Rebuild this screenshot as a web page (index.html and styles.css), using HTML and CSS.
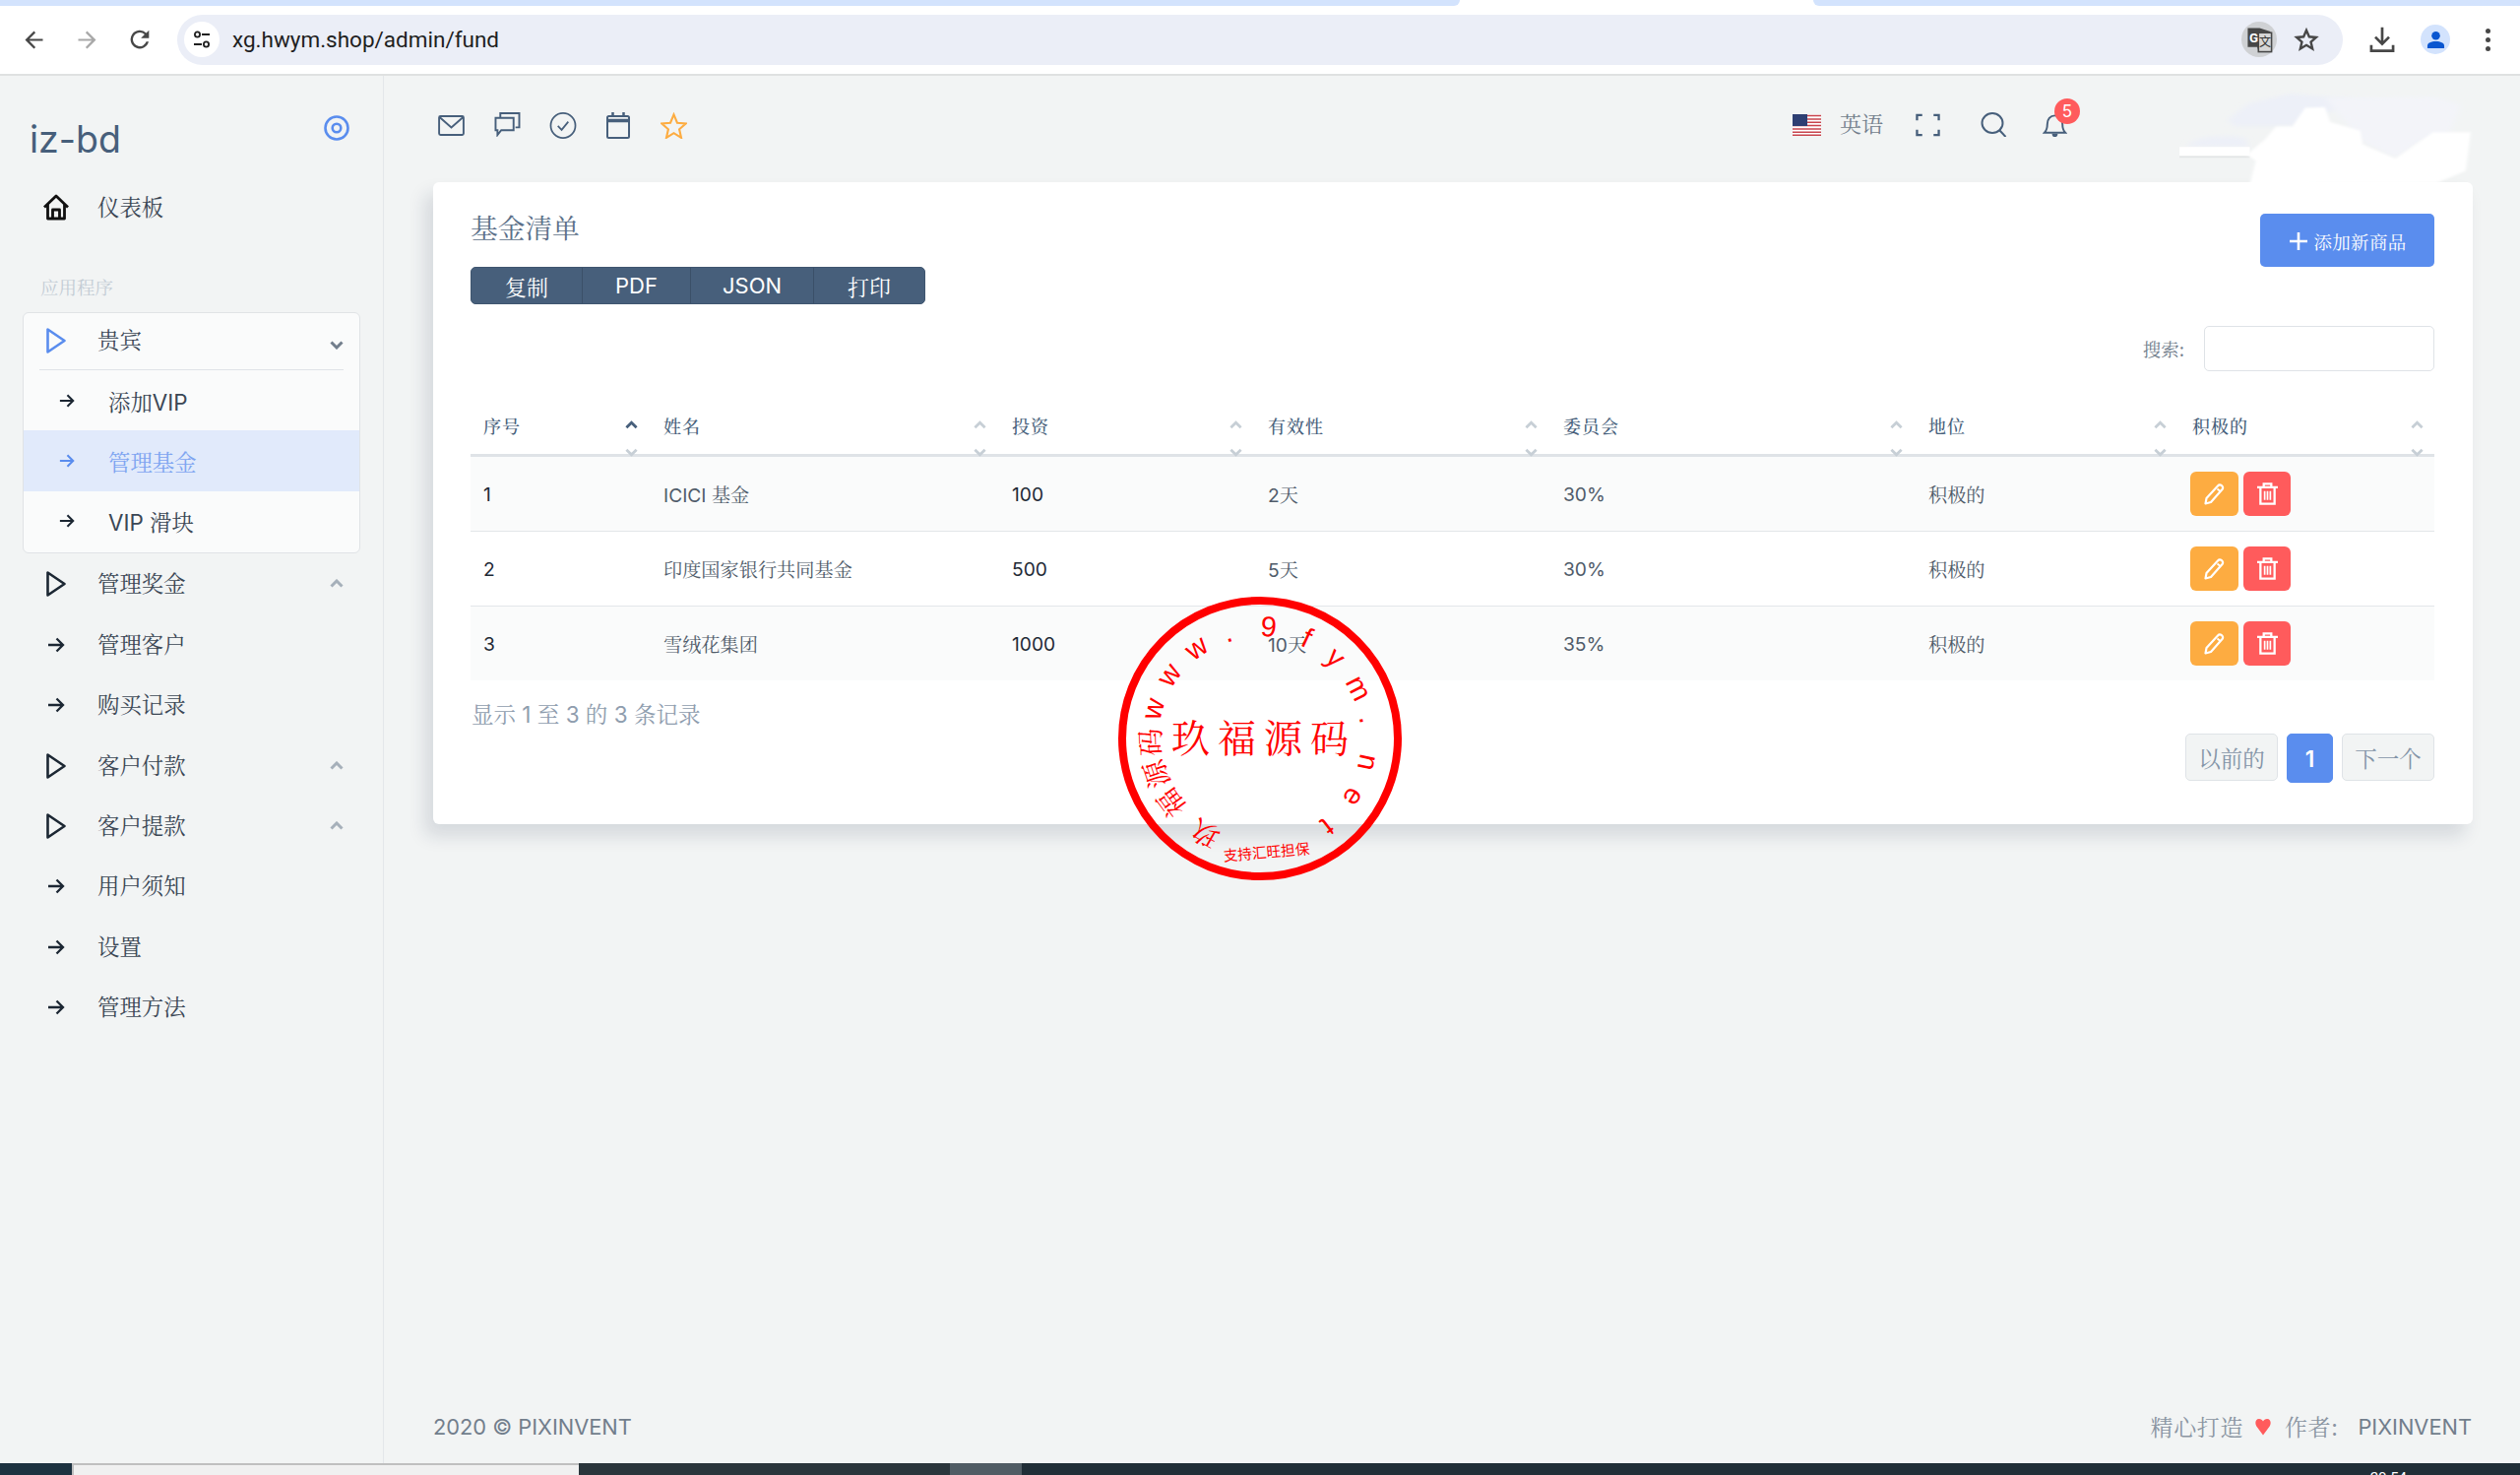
FILE: index.html
```html
<!DOCTYPE html>
<html lang="zh-CN">
<head>
<meta charset="utf-8">
<title>基金清单</title>
<link rel="stylesheet" href="styles.css">
</head>
<body>
<svg class="defs" width="0" height="0" aria-hidden="true">
  <symbol id="i-tri" viewBox="0 0 20 26"><path d="M1.500 1.500v23L18.500 13z" fill="none" stroke="currentColor" stroke-width="2.600" stroke-linejoin="round"/></symbol>
  <symbol id="i-arrow" viewBox="0 0 18 18"><path d="M1 9h15M9.500 2.500 16 9l-6.500 6.500" fill="none" stroke="currentColor" stroke-width="2.300"/></symbol>
  <symbol id="i-up" viewBox="0 0 14 9"><path d="M1.500 7.500 7 2l5.500 5.500" fill="none" stroke="currentColor" stroke-width="3"/></symbol>
  <symbol id="i-down" viewBox="0 0 14 9"><path d="M1.500 1.500 7 7l5.500-5.500" fill="none" stroke="currentColor" stroke-width="3"/></symbol>
  <symbol id="i-pen" viewBox="0 0 22 22"><path d="M1.500 20.500l1-5.500L14 2.500c1.100-1.200 2.600-1.300 3.900-.3s1.600 2.600.6 3.800L7 19z" fill="none" stroke="#fff" stroke-width="2.200" stroke-linejoin="round"/><path d="M13.500 5.500l3 2.500" stroke="#fff" stroke-width="1.800"/></symbol>
  <symbol id="i-trash" viewBox="0 0 22 24"><path d="M0 5h22M7 5V1.500h8V5M3.500 5v17.500h15V5" fill="none" stroke="#fff" stroke-width="2.400"/><path d="M8 9v9.500M11 9v9.500M14 9v9.500" fill="none" stroke="#fff" stroke-width="1.800"/></symbol>
</svg>

<header class="chrome">
  <div class="tabstrip"><span class="strip strip-a"></span><span class="strip-gap"></span><span class="strip strip-b"></span></div>
  <div class="toolbar">
    <svg class="tb-ico tb-back" viewBox="0 0 24 24"><path d="M20 11.100H7.800l5.600-5.600L12 4l-8 8 8 8 1.400-1.400-5.600-5.700H20z" fill="#474747"/></svg>
    <svg class="tb-ico tb-fwd" viewBox="0 0 24 24"><path d="M4 11.100h12.200l-5.600-5.600L12 4l8 8-8 8-1.400-1.400 5.600-5.700H4z" fill="#a8a8a8"/></svg>
    <svg class="tb-ico tb-reload" viewBox="0 0 24 24"><path d="M17.650 6.350A8 8 0 1 0 19.730 14h-2.080A6 6 0 1 1 12 6c1.660 0 3.140.69 4.220 1.780L13 11h7V4z" fill="#474747"/></svg>
    <div class="omnibox">
      <span class="site-btn"><svg class="site-ico" viewBox="0 0 20 20"><circle cx="5.500" cy="5" r="2.600" fill="none" stroke="#1f1f1f" stroke-width="1.800"/><path d="M10 5h8M2 15h8" stroke="#1f1f1f" stroke-width="1.800"/><circle cx="14.500" cy="15" r="2.600" fill="none" stroke="#1f1f1f" stroke-width="1.800"/></svg></span>
      <span class="url">xg.hwym.shop/admin/fund</span>
      <span class="tr-btn"><svg class="tr-ico" viewBox="0 0 24 24"><path d="M2 2h10l9 3v16H11l-1-3H2z" fill="#474747"/><rect x="11" y="6" width="11" height="16" fill="#d6d6d6" stroke="#474747" stroke-width="1.300"/><text x="7" y="14" class="tr-g">G</text><text x="16.500" y="17.500" class="tr-w">文</text></svg></span>
      <svg class="om-star" viewBox="0 0 24 24"><path d="M12 3.500l2.600 6 6.500.6-4.900 4.300 1.500 6.400L12 17.400l-5.700 3.400 1.500-6.400-4.900-4.300 6.500-.6z" fill="none" stroke="#474747" stroke-width="2.200" stroke-linejoin="miter"/></svg>
    </div>
    <svg class="tb-download" viewBox="0 0 24 24"><path d="M12 1.500v14M6 10l6 6 6-6M2.500 17v5h19v-5" fill="none" stroke="#474747" stroke-width="2.300"/></svg>
    <span class="avatar"><svg class="avatar-ico" viewBox="0 0 20 20"><circle cx="10" cy="5.500" r="4.500" fill="#0b57d0"/><path d="M1 19v-2.500C1 13 5 11.500 10 11.500s9 1.500 9 5V19z" fill="#0b57d0"/></svg></span>
    <span class="kebab"><i></i><i></i><i></i></span>
  </div>
</header>

<div class="app">
  <aside class="sidebar">
    <div class="brand">
      <span class="logo">iz-bd</span>
      <svg class="brand-target" viewBox="0 0 26 26"><circle cx="13" cy="13" r="11.500" fill="none" stroke="#5a8dee" stroke-width="2.600"/><circle cx="13" cy="13" r="4.300" fill="none" stroke="#5a8dee" stroke-width="2.600"/></svg>
    </div>
    <a class="nav-item"><svg class="nav-home" viewBox="0 0 28 27"><path d="M2 13.500 14 2l12 11.500M5.500 10.500V25h17V10.500M10.500 25v-9h7v9" fill="none" stroke="#111" stroke-width="2.800" stroke-linejoin="round"/></svg><span class="nav-label">仪表板</span></a>
    <div class="section-label">应用程序</div>
    <div class="group">
      <a class="nav-item group-head"><svg class="nav-tri"><use href="#i-tri"/></svg><span class="nav-label">贵宾</span><svg class="nav-chev"><use href="#i-down"/></svg></a>
      <a class="sub-item"><svg class="sub-arrow"><use href="#i-arrow"/></svg><span>添加VIP</span></a>
      <a class="sub-item is-active"><svg class="sub-arrow"><use href="#i-arrow"/></svg><span>管理基金</span></a>
      <a class="sub-item"><svg class="sub-arrow"><use href="#i-arrow"/></svg><span>VIP 滑块</span></a>
    </div>
    <a class="nav-item"><svg class="nav-tri"><use href="#i-tri"/></svg><span class="nav-label">管理奖金</span><svg class="nav-chev"><use href="#i-up"/></svg></a>
    <a class="nav-item"><svg class="nav-arrow"><use href="#i-arrow"/></svg><span class="nav-label">管理客户</span></a>
    <a class="nav-item"><svg class="nav-arrow"><use href="#i-arrow"/></svg><span class="nav-label">购买记录</span></a>
    <a class="nav-item"><svg class="nav-tri"><use href="#i-tri"/></svg><span class="nav-label">客户付款</span><svg class="nav-chev"><use href="#i-up"/></svg></a>
    <a class="nav-item"><svg class="nav-tri"><use href="#i-tri"/></svg><span class="nav-label">客户提款</span><svg class="nav-chev"><use href="#i-up"/></svg></a>
    <a class="nav-item"><svg class="nav-arrow"><use href="#i-arrow"/></svg><span class="nav-label">用户须知</span></a>
    <a class="nav-item"><svg class="nav-arrow"><use href="#i-arrow"/></svg><span class="nav-label">设置</span></a>
    <a class="nav-item"><svg class="nav-arrow"><use href="#i-arrow"/></svg><span class="nav-label">管理方法</span></a>
  </aside>

  <main class="main">
    <div class="topbar">
      <div class="top-left">
        <svg class="top-ico ico-mail" viewBox="0 0 28 22"><rect x="1" y="1" width="26" height="20" rx="1.500" fill="none" stroke="currentColor" stroke-width="2"/><path d="M1.500 2 14 13 26.500 2" fill="none" stroke="currentColor" stroke-width="2"/></svg>
        <svg class="top-ico ico-chat" viewBox="0 0 28 26"><path d="M7 5V1h20v15h-4M2 6h19v13H8l-4 5v-5H2z" fill="none" stroke="currentColor" stroke-width="2"/></svg>
        <svg class="top-ico ico-check" viewBox="0 0 28 28"><circle cx="14" cy="14" r="13" fill="none" stroke="currentColor" stroke-width="1.800"/><path d="M8.500 14.500l4 4 7-8.500" fill="none" stroke="currentColor" stroke-width="1.800"/></svg>
        <svg class="top-ico ico-cal" viewBox="0 0 24 27"><rect x="1" y="4" width="22" height="22" rx="1.500" fill="none" stroke="currentColor" stroke-width="2"/><path d="M1 8.500h22" stroke="currentColor" stroke-width="3.500"/><path d="M6.500 0v5M17.500 0v5" stroke="currentColor" stroke-width="2.500"/></svg>
        <svg class="top-ico ico-star" viewBox="0 0 28 27"><path d="M14 2l3.600 8.600 9 .8-6.800 6 2 8.900L14 21.500l-7.800 4.800 2-8.900-6.800-6 9-.8z" fill="none" stroke="#fdac41" stroke-width="2.200"/></svg>
      </div>
      <div class="top-right">
        <svg class="flag" viewBox="0 0 29 22">
          <rect width="29" height="22" fill="#fff"/>
          <path d="M0 1.500h29M0 5h29M0 8.300h29M0 11.500h29M0 15h29M0 18.200h29M0 21.300h29" stroke="#c8444d" stroke-width="1.600"/>
          <rect width="15" height="12" fill="#2e3f73"/>
        </svg>
        <span class="lang">英语</span>
        <svg class="top-ico ico-full" viewBox="0 0 26 24"><path d="M7 1.500H1.500V7M19 1.500h5.500V7M7 22.500H1.500V17M19 22.500h5.500V17" fill="none" stroke="currentColor" stroke-width="2.400"/></svg>
        <svg class="top-ico ico-search" viewBox="0 0 27 25"><ellipse cx="12" cy="11" rx="10.500" ry="10" fill="none" stroke="currentColor" stroke-width="2"/><path d="M19 18l6.500 7" stroke="currentColor" stroke-width="2"/></svg>
        <span class="bell-wrap">
          <svg class="top-ico ico-bell" viewBox="0 0 26 25"><path d="M2 20c2-2 3-4 3-9 0-5 3-9 8-9s8 4 8 9c0 5 1 7 3 9z" fill="none" stroke="currentColor" stroke-width="2"/><path d="M10 21a3 3.500 0 0 0 6 0z" fill="currentColor"/></svg>
          <span class="badge">5</span>
        </span>
      </div>
    </div>

    <section class="card">
      <div class="card-head">
        <div>
          <h1 class="card-title">基金清单</h1>
          <div class="btn-group"><button class="btn-g btn-g1">复制</button><button class="btn-g btn-g2">PDF</button><button class="btn-g btn-g3">JSON</button><button class="btn-g btn-g4">打印</button></div>
        </div>
        <button class="btn-add"><svg class="add-plus" viewBox="0 0 18 18"><path d="M9 0v18M0 9h18" stroke="#fff" stroke-width="2.600"/></svg>添加新商品</button>
      </div>
      <div class="search-row"><label class="search-label">搜索:</label><input class="search-input" type="text" aria-label="搜索"></div>
      <table class="table">
        <colgroup><col class="c1"><col class="c2"><col class="c3"><col class="c4"><col class="c5"><col class="c6"><col class="c7"></colgroup>
        <thead>
          <tr>
            <th>序号<svg class="sort-up sort-on"><use href="#i-up"/></svg><svg class="sort-down"><use href="#i-down"/></svg></th>
            <th>姓名<svg class="sort-up"><use href="#i-up"/></svg><svg class="sort-down"><use href="#i-down"/></svg></th>
            <th>投资<svg class="sort-up"><use href="#i-up"/></svg><svg class="sort-down"><use href="#i-down"/></svg></th>
            <th>有效性<svg class="sort-up"><use href="#i-up"/></svg><svg class="sort-down"><use href="#i-down"/></svg></th>
            <th>委员会<svg class="sort-up"><use href="#i-up"/></svg><svg class="sort-down"><use href="#i-down"/></svg></th>
            <th>地位<svg class="sort-up"><use href="#i-up"/></svg><svg class="sort-down"><use href="#i-down"/></svg></th>
            <th>积极的<svg class="sort-up"><use href="#i-up"/></svg><svg class="sort-down"><use href="#i-down"/></svg></th>
          </tr>
        </thead>
        <tbody>
          <tr><td class="num">1</td><td>ICICI 基金</td><td class="num">100</td><td>2天</td><td>30%</td><td>积极的</td><td><div class="actions"><button class="act act-edit"><svg class="act-pen"><use href="#i-pen"/></svg></button><button class="act act-del"><svg class="act-trash"><use href="#i-trash"/></svg></button></div></td></tr>
          <tr><td class="num">2</td><td>印度国家银行共同基金</td><td class="num">500</td><td>5天</td><td>30%</td><td>积极的</td><td><div class="actions"><button class="act act-edit"><svg class="act-pen"><use href="#i-pen"/></svg></button><button class="act act-del"><svg class="act-trash"><use href="#i-trash"/></svg></button></div></td></tr>
          <tr><td class="num">3</td><td>雪绒花集团</td><td class="num">1000</td><td>10天</td><td>35%</td><td>积极的</td><td><div class="actions"><button class="act act-edit"><svg class="act-pen"><use href="#i-pen"/></svg></button><button class="act act-del"><svg class="act-trash"><use href="#i-trash"/></svg></button></div></td></tr>
        </tbody>
      </table>
      <div class="table-foot">
        <div class="info">显示 1 至 3 的 3 条记录</div>
        <div class="pager"><button class="pg pg-prev">以前的</button><button class="pg pg-cur">1</button><button class="pg pg-next">下一个</button></div>
      </div>
    </section>

    <footer class="footer">
      <span>2020 © PIXINVENT</span>
      <span class="foot-right"><span class="foot-cjk">精心打造</span><svg class="heart" viewBox="0 0 16 18"><path d="M8 17.500 1.300 8.500C-.6 5.400.3 1 3.900 1 5.800 1 7.200 2 8 3.500 8.800 2 10.200 1 12.100 1c3.600 0 4.500 4.400 2.600 7.500z" fill="#ff5b5c"/></svg><span class="foot-cjk">作者:</span><span class="foot-name">PIXINVENT</span></span>
    </footer>
  </main>
</div>

<div class="taskbar">
  <span class="task-start"></span>
  <span class="task-window"></span>
  <span class="task-a"></span>
  <span class="task-hi"></span>
  <span class="task-b"><span class="clock">20:54</span></span>
</div>

<svg class="cloud" viewBox="880 270 600 290" preserveAspectRatio="none" aria-hidden="true">
  <defs>
    <filter id="soft" x="-10%" y="-10%" width="120%" height="120%"><feGaussianBlur stdDeviation="6"/></filter>
    <filter id="edge" x="-5%" y="-5%" width="110%" height="110%"><feGaussianBlur stdDeviation="3"/></filter>
  </defs>
  <g filter="url(#soft)">
    <path d="M985 365 1030 315 1110 285 1190 295 1300 300 1180 345 1120 385 1000 385z" fill="#edf0f8"/>
    <path d="M1180 300 1400 295 1450 320 1430 400 1380 425 1320 480 1250 425z" fill="#f3f4f9"/>
    <path d="M905 445C915 420 960 408 1020 418L1030 447z" fill="#edf0f8"/>
  </g>
  <path d="M890 447H1030V474H890z" fill="#fff"/>
  <path d="M890 475H1030V480H890z" fill="#e3e5e6"/>
  <path d="M1030 560 1042 490 1025 470 1060 425 1082 385 1115 385 1140 328 1180 326 1190 372 1250 398 1255 440 1320 482 1395 402 1470 402 1460 520 1402 556z" fill="#fff" filter="url(#edge)"/>
</svg>

<svg class="stamp" viewBox="-144 -144 288 288">
  <circle r="140" fill="none" stroke="#f00" stroke-width="8"/>
  <text class="st-center" x="4" y="14">玖福源码</text>
  <g class="st-cjk">
    <text transform="rotate(210) translate(0 -101)">玖</text>
    <text transform="rotate(234) translate(0 -101)">福</text>
    <text transform="rotate(251) translate(0 -101)">源</text>
    <text transform="rotate(268) translate(0 -101)">码</text>
  </g>
  <g class="st-lat">
    <text transform="rotate(285.500) translate(0 -103)">w</text>
    <text transform="rotate(305) translate(0 -103)">w</text>
    <text transform="rotate(325) translate(0 -103)">w</text>
    <text transform="rotate(343) translate(0 -103)">.</text>
    <text transform="rotate(4.500) translate(0 -104)">9</text>
    <text transform="rotate(25) translate(0 -103)">f</text>
    <text transform="rotate(43) translate(0 -103)">y</text>
    <text transform="rotate(63) translate(0 -103)">m</text>
    <text transform="rotate(80) translate(0 -103)">.</text>
    <text transform="rotate(102.600) translate(0 -103)">n</text>
    <text transform="rotate(122) translate(0 -103)">e</text>
    <text transform="rotate(142.600) translate(0 -103)">t</text>
  </g>
  <text class="st-small" transform="translate(7 121) rotate(-5)" textLength="88" lengthAdjust="spacingAndGlyphs">支持汇旺担保</text>
</svg>
</body>
</html>
```

FILE: styles.css
```css
* { box-sizing: border-box; }
html, body { margin: 0; padding: 0; width: 2560px; height: 1498px; overflow: hidden; }
body {
  position: relative;
  display: flex;
  flex-direction: column;
  background: #f2f4f4;
  color: #304156;
  font-family: Inter, "Noto Serif CJK SC", "Noto Sans CJK SC", sans-serif;
  font-size: 19.2px;
}
button { font: inherit; border: 0; padding: 0; }
svg { display: block; flex: none; }
.defs { position: absolute; }

/* browser chrome */
.chrome { flex: none; background: #d3e3fd; }
.tabstrip { display: flex; height: 6px; background: #fff; }
.strip { display: block; height: 6px; background: #d3e3fd; }
.strip-a { width: 1483px; border-bottom-right-radius: 10px; }
.strip-gap { width: 359px; }
.strip-b { flex: 1; border-bottom-left-radius: 10px; }
.toolbar {
  display: flex; align-items: center;
  height: 71px; padding: 0 0 1px 21px;
  background: #fff;
  border-bottom: 2px solid #dfe1e1;
}
.tb-ico { width: 27px; height: 27px; }
.tb-fwd { margin-left: 27px; }
.tb-reload { margin-left: 26px; width: 28px; height: 28px; }
.omnibox {
  display: flex; align-items: center;
  width: 2200px; height: 51px; margin-left: 24px; padding: 0 24px 0 7px;
  background: #ebeef7; border-radius: 26px;
}
.site-btn { display: flex; align-items: center; justify-content: center; width: 36px; height: 36px; border-radius: 50%; background: #fff; }
.site-ico { width: 20px; height: 20px; }
.url { margin-left: 13px; font-family: Roboto, sans-serif; font-size: 22.500px; color: #1f1f1f; }
.tr-btn { display: flex; align-items: center; justify-content: center; width: 36px; height: 36px; margin-left: auto; border-radius: 50%; background: #cfd1d4; }
.tr-ico { width: 29px; height: 29px; }
.tr-g { font: 700 11px Roboto, sans-serif; fill: #fff; text-anchor: middle; }
.tr-w { font: 10px "Noto Sans CJK SC", sans-serif; fill: #333; text-anchor: middle; }
.om-star { width: 26px; height: 26px; margin-left: 17px; }
.tb-download { width: 28px; height: 28px; margin-left: 26px; }
.avatar { display: flex; align-items: center; justify-content: center; width: 30px; height: 30px; margin-left: 25px; border-radius: 50%; background: #d3e3fd; }
.avatar-ico { width: 19px; height: 19px; }
.kebab { display: flex; flex-direction: column; gap: 4px; margin-left: 36px; }
.kebab i { display: block; width: 5px; height: 5px; border-radius: 50%; background: #474747; }

/* shell */
.app { flex: 1; display: flex; min-height: 0; }
.sidebar { flex: none; width: 390px; border-right: 1px solid #e4e7ea; padding: 0 23px; }
.main { flex: 1; display: flex; flex-direction: column; padding: 0 48px 0 50px; min-width: 0; }

/* sidebar */
.brand { display: flex; justify-content: space-between; height: 103px; padding: 40px 11px 0 7px; }
.logo { font-size: 37.500px; line-height: 50px; color: #475f7b; }
.brand-target { width: 26px; height: 26px; }
.nav-item { position: relative; display: flex; align-items: center; height: 61.4px; color: #3b4755; font-size: 22.400px; }
.nav-label { position: absolute; left: 76px; top: 50%; transform: translateY(-50%); line-height: 30px; white-space: nowrap; }
.nav-home { width: 28px; height: 27px; margin-left: 20px; }
.nav-tri { width: 20px; height: 26px; margin-left: 24px; color: #1c2733; }
.nav-arrow { width: 18px; height: 18px; margin-left: 25px; color: #1c2733; }
.nav-chev { position: absolute; left: 312px; top: 50%; width: 14px; height: 9px; margin-top: -5px; color: #a6b0ba; }
.section-label { height: 75.6px; padding-top: 38px; padding-left: 18px; font-size: 18.500px; line-height: 26px; color: #c3ccd4; }
.group { width: 343px; padding-bottom: 1px; margin-bottom: .5px; background: #fafbfb; border: 1px solid #e0e3e6; border-radius: 6px; overflow: hidden; }
.group-head { height: 58px; margin: 0 16px; border-bottom: 1px solid #dfe3e7; width: 309px; }
.group-head .nav-tri { margin-left: 7px; color: #5a8dee; }
.group-head .nav-label { left: 59px; }
.group-head .nav-chev { left: 295px; margin-top: 0; color: #727e8c; }
.sub-item { display: flex; align-items: center; gap: 34px; height: 61.4px; padding-left: 36px; font-size: 22.400px; color: #3b4755; }
.sub-arrow { width: 16px; height: 18px; color: #1c2733; }
.is-active { background: #e1eafb; color: #7ea5f1; }
.is-active .sub-arrow { color: #5a8dee; }

/* top bar */
.topbar { flex: none; display: flex; justify-content: space-between; height: 108px; padding: 37px 0 0 5px; color: #475f7b; }
.top-left { display: flex; align-items: flex-start; }
.top-ico { color: #475f7b; }
.ico-mail { width: 27px; height: 21px; margin-top: 3px; }
.ico-chat { width: 28px; height: 25px; margin-left: 29px; }
.ico-check { width: 28px; height: 27px; margin-left: 29px; }
.ico-cal { width: 24px; height: 27px; margin-left: 30px; }
.ico-star { width: 27px; height: 27px; margin-left: 31px; }
.top-right { display: flex; align-items: flex-start; margin-right: 412px; }
.flag { width: 29px; height: 22px; margin-top: 2px; }
.lang { margin-left: 19px; font-size: 22px; line-height: 24px; color: #727e8c; }
.ico-full { width: 25px; height: 24px; margin-left: 33px; margin-top: 1px; }
.ico-search { width: 27px; height: 25px; margin-left: 41px; }
.bell-wrap { position: relative; margin-left: 36px; }
.ico-bell { width: 25px; height: 25px; margin-top: 1px; }
.badge { position: absolute; left: 12px; top: -14px; width: 26px; height: 26px; border-radius: 50%; background: #ff5b5c; color: #fff; font-size: 17px; line-height: 26px; text-align: center; }

/* card */
.card { flex: none; height: 652px; padding: 32px 39px 0 38px; background: #fff; border-radius: 6px; box-shadow: -8px 12px 18px 0 rgba(25, 42, 70, .13); }
.card-head { display: flex; justify-content: space-between; align-items: flex-start; }
.card-title { margin: 0 0 24px; font-size: 27.700px; line-height: 30px; font-weight: 400; color: #5c7089; }
.btn-group { display: flex; height: 38px; border-radius: 5px; overflow: hidden; background: #475f7b; border: 1px solid #3f556f; }
.btn-g { height: 36px; background: #475f7b; color: #fff; font-size: 22px; border-right: 1px solid #3b5068; }
.btn-g1 { width: 113px; }
.btn-g2 { width: 110px; }
.btn-g3 { width: 125px; }
.btn-g4 { width: 112px; border-right: 0; }
.btn-add { display: flex; align-items: center; justify-content: center; width: 177px; height: 54px; padding: 2px 0 0 2px; background: #5a8dee; border-radius: 5px; color: #fff; font-size: 18.500px; letter-spacing: .3px; }
.add-plus { width: 18px; height: 18px; margin-right: 6px; }
.search-row { display: flex; justify-content: flex-end; align-items: center; gap: 20px; margin-top: 22px; }
.search-label { font-size: 18.500px; color: #727e8c; }
.search-input { width: 234px; height: 46px; border: 1px solid #dfe3e7; border-radius: 5px; background: #fff; }

/* table */
.table { width: 1995px; margin-top: 26px; table-layout: fixed; border-collapse: separate; border-spacing: 0; }
.c1 { width: 183px; }
.c2 { width: 354px; }
.c3 { width: 260px; }
.c4 { width: 300px; }
.c5 { width: 371px; }
.c6 { width: 268px; }
.c7 { width: 259px; }
.table th { position: relative; height: 61px; padding: 0 13px; text-align: left; font-size: 18px; font-weight: 500; letter-spacing: 1px; color: #475f7b; border-bottom: 3px solid #dfe3e7; }
.sort-up, .sort-down { position: absolute; right: 13px; width: 13px; height: 9px; color: #c7cfd6; }
.sort-up { top: 24px; }
.sort-down { top: 52px; }
.sort-on { color: #475f7b; }
.table th:last-child .sort-up, .table th:last-child .sort-down { right: 11px; }
.table td { height: 76px; padding: 0 13px; border-top: 1px solid #e3e6e9; color: #505c6a; white-space: nowrap; }
.table tbody tr:first-child td { border-top: 0; height: 75px; }
.table tbody tr:nth-child(odd) { background: #fafbfb; }
.table .num { color: #1f2a36; }
.actions { display: flex; gap: 5px; margin-left: -2px; }
.act { display: flex; align-items: center; justify-content: center; height: 45px; border-radius: 6px; }
.act-edit { width: 49px; background: #fdac41; }
.act-del { width: 48px; background: #ff5b5c; }
.act-pen { width: 22px; height: 22px; }
.act-trash { width: 21px; height: 23px; }

.table-foot { display: flex; justify-content: space-between; align-items: flex-start; }
.info { margin-top: 22px; padding-left: 1px; font-size: 22.500px; line-height: 26px; color: #8f9dae; }
.pager { display: flex; align-items: flex-start; gap: 9px; margin-top: 54px; }
.pg { height: 48px; font-size: 22.500px; border: 1px solid #dfe3e7; border-radius: 5px; background: #f2f4f4; color: #8494a7; }
.pg-prev, .pg-next { width: 94px; }
.pg-cur { width: 47px; height: 50px; background: #5a8dee; border-color: #5a8dee; color: #fff; font-weight: 600; }

/* footer */
.footer { flex: none; display: flex; justify-content: space-between; align-items: center; margin-top: auto; height: 75px; padding: 0 1px 0 0; font-size: 21.800px; color: #727e8c; }
.foot-right { display: flex; align-items: center; }
.foot-cjk { font-size: 23px; letter-spacing: .6px; color: #8a95a2; }
.heart { width: 16px; height: 18px; margin: 0 14px 0 12px; }
.foot-name { margin-left: 20px; }

/* taskbar */
.taskbar { flex: none; display: flex; height: 12px; background: #1f2d36; overflow: hidden; }
.task-start { width: 73px; background: #1d3240; }
.task-window { width: 515px; background: #f0f0f0; border-top: 2px solid #bfbfbf; border-left: 2px solid #bfbfbf; }
.task-a { width: 377px; background: #2a353b; }
.task-hi { width: 73px; background: #505c64; }
.task-b { flex: 1; position: relative; background: #202e37; }
.clock { position: absolute; right: 115px; top: 7px; color: #fff; font-size: 15px; line-height: 16px; font-family: Roboto, sans-serif; }

/* overlays */
.cloud { position: absolute; left: 2209px; top: 90px; width: 306px; height: 97px; }
.stamp { position: absolute; left: 1136px; top: 606px; width: 288px; height: 288px; }
.stamp text { fill: #f00; text-anchor: middle; }
.st-center { font-family: "Noto Serif CJK SC", "Noto Sans CJK SC", sans-serif; font-size: 39px; letter-spacing: 8px; }
.st-cjk text { font-family: "Noto Serif CJK SC", "Noto Sans CJK SC", sans-serif; font-size: 28px; }
.st-lat text { font-family: "Liberation Sans", sans-serif; font-size: 29px; }
.st-small { font-family: "Noto Sans CJK SC", sans-serif; font-size: 15px; }
```
